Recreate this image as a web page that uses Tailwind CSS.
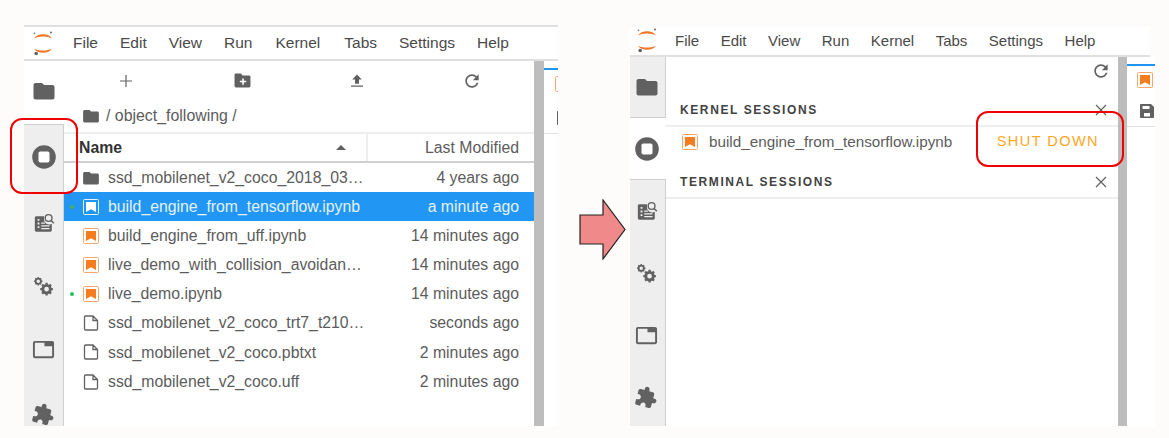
<!DOCTYPE html>
<html lang="en">
<head>
  <meta charset="UTF-8" />
  <title>JupyterLab running sessions</title>
  <script src="https://cdn.jsdelivr.net/npm/@tailwindcss/browser@4"></script>
</head>
<body class="w-[1169px] h-[438px] overflow-hidden bg-[#fdfcfa] font-['Liberation_Sans',Arial,sans-serif] relative">
  <svg class="hidden">
    <symbol id="logo" viewBox="0 0 20 25">
      <path d="M1 7.500C4 1.800 16 1.800 19 7.500C15 4.800 5 4.800 1 7.500Z" fill="#f37726"/>
      <path d="M1 17.500C5 20.300 15 20.300 19 17.500C16 23.300 4 23.300 1 17.500Z" fill="#f37726"/>
      <circle cx="18" cy="1.500" r="1.100" fill="#757575"/><circle cx="1.500" cy="2.400" r=".8" fill="#757575"/><circle cx="3.200" cy="22.500" r="1.800" fill="#616161"/>
    </symbol>
    <symbol id="folder" viewBox="0 0 24 24"><path fill="#616161" d="M10 4H3.500C2.400 4 1.500 4.900 1.500 6v12.500c0 1.100.9 2 2 2h17c1.100 0 2-.9 2-2V8c0-1.100-.9-2-2-2H12l-2-2z"/></symbol>
    <symbol id="stop" viewBox="0 0 24 24"><circle cx="12" cy="12" r="11.800" fill="#616161"/><rect x="6.500" y="6.500" width="11" height="11" rx="1.800" fill="#fff"/></symbol>
    <symbol id="inspect" viewBox="0 0 24 24">
      <path fill="#616161" d="M2 6C2 5.200 2.700 4.500 3.500 4.500H12v3.500c0 3 2.500 5.500 5.500 5.500 1.200 0 2.500-.4 3-.8V20c0 .8-.7 1.500-1.500 1.500H3.500C2.700 21.500 2 20.800 2 20z"/>
      <path fill="#eee" d="M5 7.500h2v2H5zM5 11.500h2v2H5zM5 15.500h2v2H5zM9 14.500h9v1.200H9zM9 17.500h9v1.200H9zM9 11.500h4v1.200H9z"/>
      <circle cx="17" cy="6.500" r="3.700" fill="none" stroke="#616161" stroke-width="1.500"/>
      <path d="M19.700 9.200l3 3" stroke="#616161" stroke-width="1.700"/>
    </symbol>
    <symbol id="gears" viewBox="0 0 24 24">
      <circle cx="6" cy="6" r="3" fill="none" stroke="#616161" stroke-width="2"/>
      <path d="M6 1.200v2M6 8.800v2M1.200 6h2M8.800 6h2M2.700 2.700l1.300 1.300M8 8l1.300 1.300M9.300 2.700L8 4M4 8L2.700 9.300" stroke="#616161" stroke-width="1.600"/>
      <circle cx="15.500" cy="15" r="4.300" fill="none" stroke="#616161" stroke-width="3.200"/>
      <path d="M15.500 7.800v3M15.500 19.200v3M8.300 15h3M19.700 15h3M10.400 9.900l2 2M18.600 18.100l2 2M20.600 9.900l-2 2M12.400 18.100l-2 2" stroke="#616161" stroke-width="2.600"/>
    </symbol>
    <symbol id="tab" viewBox="0 0 24 24"><path fill="#616161" d="M3 3h18c1.100 0 2 .9 2 2v14c0 1.100-.9 2-2 2H3c-1.100 0-2-.9-2-2V5c0-1.100.9-2 2-2zm0 2v14h18V8.500h-8V5z"/></symbol>
    <symbol id="puzzle" viewBox="0 0 24 24"><path fill="#616161" transform="rotate(15 12 12)" d="M20.500 11H19V7c0-1.100-.9-2-2-2h-4V3.500C13 2.120 11.880 1 10.500 1S8 2.120 8 3.500V5H4c-1.100 0-1.990.9-1.990 2v3.800H3.500c1.490 0 2.700 1.210 2.700 2.700s-1.210 2.700-2.700 2.700H2V20c0 1.100.9 2 2 2h3.800v-1.500c0-1.490 1.210-2.700 2.700-2.700 1.490 0 2.700 1.210 2.700 2.700V22H17c1.100 0 2-.9 2-2v-4h1.500c1.380 0 2.500-1.120 2.500-2.500S21.880 11 20.500 11z"/></symbol>
    <symbol id="nb" viewBox="0 0 16 16"><rect x=".5" y=".5" width="15" height="15" rx="1" fill="#fff" stroke="#f9a66d"/><path fill="#f57c1f" d="M3 3h10v10l-5-2.800L3 13z"/></symbol>
    <symbol id="nbsel" viewBox="0 0 16 16"><rect x=".5" y=".5" width="15" height="15" rx="1" fill="#2196f3" stroke="#e3f2fd"/><path fill="#fff" d="M3 3h10v10l-5-2.800L3 13z"/></symbol>
    <symbol id="file" viewBox="0 0 16 16"><path fill="none" stroke="#616161" stroke-width="1.300" d="M1.500 2c0-.6.400-1 1-1H10l4.500 4.500V14c0 .6-.4 1-1 1h-11c-.6 0-1-.4-1-1zM10 1v4.500h4.500"/></symbol>
    <symbol id="refresh" viewBox="0 0 24 24"><path fill="#616161" d="M17.650 6.350C16.200 4.900 14.210 4 12 4c-4.420 0-7.990 3.580-7.990 8s3.570 8 7.990 8c3.730 0 6.840-2.550 7.730-6h-2.080c-.82 2.330-3.040 4-5.650 4-3.310 0-6-2.690-6-6s2.690-6 6-6c1.660 0 3.140.69 4.220 1.780L13 11h7V4l-2.350 2.350z"/></symbol>
    <symbol id="close" viewBox="0 0 12 12"><path stroke="#616161" stroke-width="1.200" d="M1 1l10 10M11 1L1 11"/></symbol>
    <symbol id="upload" viewBox="0 0 14 14"><path fill="#616161" d="M7 .5l4.800 5H9v4.300H5V5.500H2.200zM1 11.500h12v1.300H1z"/></symbol>
    <symbol id="newfolder" viewBox="0 0 16 14"><path fill="#616161" d="M6.500 .5H1.800C1 .5.500 1.100.500 1.800v10.400c0 .7.500 1.300 1.300 1.300h12.400c.7 0 1.300-.6 1.300-1.300V3.500c0-.7-.6-1.300-1.300-1.300H8.200z"/><path stroke="#fff" stroke-width="1.500" d="M8.500 5v6M5.500 8h6"/></symbol>
    <symbol id="save" viewBox="0 0 16 16"><path fill="#616161" d="M2 1h10l3 3v10c0 .6-.4 1-1 1H2c-.6 0-1-.4-1-1V2c0-.6.400-1 1-1z"/><path fill="#fff" d="M3.500 3h7v3h-7zM5 10h6v3.500H5z"/></symbol>
  </svg>

  <div class="flex items-start">
    <!-- file browser window -->
    <div class="ml-[24px] mt-[25px] w-[534px] h-[401px] bg-white flex flex-col border-t-2 border-[#e0e0e0] shrink-0">
      <div class="h-[34px] flex items-center border-b-2 border-[#e0e0e0] shrink-0 text-[15.500px] text-[#4a4a4a]">
        <svg class="w-[20px] h-[25px] ml-[9px] mr-[20px]"><use href="#logo"/></svg>
        <span class="mr-[22px]">File</span><span class="mr-[22px]">Edit</span><span class="mr-[22px]">View</span><span class="mr-[23px]">Run</span><span class="mr-[24px]">Kernel</span><span class="mr-[22px]">Tabs</span><span class="mr-[22px]">Settings</span><span>Help</span>
      </div>
      <div class="flex flex-1 min-h-0">
        <div class="w-[40px] shrink-0 flex flex-col">
          <div class="h-[63px] bg-white flex items-center justify-center pb-[3px]"><svg class="w-[24px] h-[24px]"><use href="#folder"/></svg></div>
          <div class="flex-1 bg-[#eeeeee] border-t border-r border-[#cfcfcf] flex flex-col items-center">
            <svg class="w-[24px] h-[24px] mt-[20px]"><use href="#stop"/></svg>
            <svg class="w-[22px] h-[22px] mt-[43px]"><use href="#inspect"/></svg>
            <svg class="w-[21px] h-[21px] mt-[42px]"><use href="#gears"/></svg>
            <svg class="w-[23px] h-[23px] mt-[41px]"><use href="#tab"/></svg>
            <svg class="w-[23px] h-[23px] mt-[42px]"><use href="#puzzle"/></svg>
          </div>
        </div>
        <div class="w-[470px] shrink-0 flex flex-col text-[15.800px] text-[#5c5c5c]">
          <div class="h-[39px] flex items-center shrink-0">
            <svg class="w-[12px] h-[12px] ml-[56px]" viewBox="0 0 12 12"><path stroke="#616161" stroke-width="1.200" d="M6 0v12M0 6h12"/></svg>
            <svg class="w-[17px] h-[15px] ml-[102px]"><use href="#newfolder"/></svg>
            <svg class="w-[14px] h-[14px] ml-[99px]"><use href="#upload"/></svg>
            <svg class="w-[20px] h-[20px] ml-[98px]"><use href="#refresh"/></svg>
          </div>
          <div class="h-[32px] flex items-center pl-[18px] pb-[1px] shrink-0">
            <svg class="w-[18px] h-[18px] mr-[6px]"><use href="#folder"/></svg><span class="text-[15.900px]">/ object_following /</span>
          </div>
          <div class="h-[31px] flex border-t-2 border-b-2 border-t-[#eeeeee] border-b-[#d0d0d0] shrink-0">
            <div class="w-[304px] border-r-2 border-[#eeeeee] flex items-center justify-between pl-[15px] pr-[20px]">
              <span class="font-bold text-[#333]">Name</span>
              <span class="w-0 h-0 border-x-[5px] border-x-transparent border-b-[5px] border-b-[#616161]"></span>
            </div>
            <div class="flex-1 flex items-center justify-end pr-[15px]">Last Modified</div>
          </div>
          <div class="flex flex-col">
            <div class="h-[29.150px] flex items-center pl-[18px] pr-[15px]"><svg class="w-[18px] h-[18px] mr-[8px] shrink-0"><use href="#folder"/></svg><span>ssd_mobilenet_v2_coco_2018_03…</span><span class="ml-auto">4 years ago</span></div>
            <div class="h-[29.150px] flex items-center pl-[19px] pr-[15px] bg-[#2196f3] text-[#e3f2fd] relative"><span class="absolute left-[6px] w-[4px] h-[4px] rounded-full bg-[#4caf50]"></span><svg class="w-[16px] h-[16px] mr-[9px] shrink-0"><use href="#nbsel"/></svg><span>build_engine_from_tensorflow.ipynb</span><span class="ml-auto">a minute ago</span></div>
            <div class="h-[29.150px] flex items-center pl-[19px] pr-[15px]"><svg class="w-[16px] h-[16px] mr-[9px] shrink-0"><use href="#nb"/></svg><span>build_engine_from_uff.ipynb</span><span class="ml-auto">14 minutes ago</span></div>
            <div class="h-[29.150px] flex items-center pl-[19px] pr-[15px]"><svg class="w-[16px] h-[16px] mr-[9px] shrink-0"><use href="#nb"/></svg><span>live_demo_with_collision_avoidan…</span><span class="ml-auto">14 minutes ago</span></div>
            <div class="h-[29.150px] flex items-center pl-[19px] pr-[15px] relative"><span class="absolute left-[6px] w-[4px] h-[4px] rounded-full bg-[#22c55e]"></span><svg class="w-[16px] h-[16px] mr-[9px] shrink-0"><use href="#nb"/></svg><span>live_demo.ipynb</span><span class="ml-auto">14 minutes ago</span></div>
            <div class="h-[29.150px] flex items-center pl-[19px] pr-[15px]"><svg class="w-[16px] h-[16px] mr-[9px] shrink-0"><use href="#file"/></svg><span>ssd_mobilenet_v2_coco_trt7_t210…</span><span class="ml-auto">seconds ago</span></div>
            <div class="h-[29.150px] flex items-center pl-[19px] pr-[15px]"><svg class="w-[16px] h-[16px] mr-[9px] shrink-0"><use href="#file"/></svg><span>ssd_mobilenet_v2_coco.pbtxt</span><span class="ml-auto">2 minutes ago</span></div>
            <div class="h-[29.150px] flex items-center pl-[19px] pr-[15px]"><svg class="w-[16px] h-[16px] mr-[9px] shrink-0"><use href="#file"/></svg><span>ssd_mobilenet_v2_coco.uff</span><span class="ml-auto">2 minutes ago</span></div>
          </div>
        </div>
        <div class="flex-1 flex min-w-0">
          <div class="w-[10px] bg-[#bdbdbd] shrink-0"></div>
          <div class="flex-1 bg-white pt-[7px] overflow-hidden">
            <div class="border-t-2 border-[#2196f3] h-[65px] pl-[11px] overflow-hidden">
              <svg class="w-[16px] h-[16px] mt-[6px]"><use href="#nb"/></svg>
              <svg class="w-[16px] h-[16px] mt-[18px] ml-[1px]"><use href="#save"/></svg>
            </div>
            <div class="border-t border-[#e0e0e0]"></div>
          </div>
        </div>
      </div>
    </div>

    <!-- arrow between the two windows -->
    <svg class="ml-[21px] mt-[199px] w-[47px] h-[61px] shrink-0" viewBox="0 0 47 61">
      <path d="M1 16h23V1l22 29.500L24 60V45H1z" fill="#f08a8a" stroke="#222" stroke-width="1.200"/>
    </svg>

    <!-- running sessions window -->
    <div class="ml-[4px] mt-[27px] w-[520px] h-[399px] bg-white flex flex-col shrink-0">
      <div class="h-[30px] flex items-center border-b-2 border-[#e0e0e0] shrink-0 text-[15px] text-[#4a4a4a]">
        <svg class="w-[20px] h-[25px] ml-[7px] mr-[18px] mb-[2px]"><use href="#logo"/></svg>
        <span class="mr-[21.500px]">File</span><span class="mr-[21.500px]">Edit</span><span class="mr-[21.500px]">View</span><span class="mr-[21.500px]">Run</span><span class="mr-[21.500px]">Kernel</span><span class="mr-[21.500px]">Tabs</span><span class="mr-[21.500px]">Settings</span><span>Help</span>
      </div>
      <div class="flex flex-1 min-h-0">
        <div class="w-[36px] shrink-0 flex flex-col">
          <div class="h-[61px] bg-[#eeeeee] border-r border-b border-[#cfcfcf] flex items-center justify-center pr-[2px]"><svg class="w-[24px] h-[24px]"><use href="#folder"/></svg></div>
          <div class="h-[61px] bg-white flex items-center justify-center pr-[2px]"><svg class="w-[24px] h-[24px]"><use href="#stop"/></svg></div>
          <div class="flex-1 bg-[#eeeeee] border-t border-r border-[#cfcfcf] flex flex-col items-center pr-[2px]">
            <svg class="w-[22px] h-[22px] mt-[20px]"><use href="#inspect"/></svg>
            <svg class="w-[21px] h-[21px] mt-[41px]"><use href="#gears"/></svg>
            <svg class="w-[23px] h-[23px] mt-[40px]"><use href="#tab"/></svg>
            <svg class="w-[23px] h-[23px] mt-[39px]"><use href="#puzzle"/></svg>
          </div>
        </div>
        <div class="w-[452px] shrink-0 flex flex-col text-[15.250px] text-[#5c5c5c]">
          <div class="h-[30px] flex items-center justify-end pr-[7px] shrink-0 pb-[2px]"><svg class="w-[20px] h-[20px]"><use href="#refresh"/></svg></div>
          <div class="h-[40px] flex items-center justify-between pl-[14px] pr-[11px] pt-[8px] border-b-2 border-[#eeeeee] shrink-0">
            <span class="font-bold text-[12px] tracking-[1.600px] text-[#424242]">KERNEL SESSIONS</span>
            <svg class="w-[12px] h-[12px]"><use href="#close"/></svg>
          </div>
          <div class="h-[30px] flex items-center pl-[16px] pr-[19px] shrink-0">
            <svg class="w-[16px] h-[16px] mr-[11px]"><use href="#nb"/></svg><span>build_engine_from_tensorflow.ipynb</span>
            <span class="ml-auto text-[#ffa726] text-[14.600px] tracking-[1.400px]">SHUT DOWN</span>
          </div>
          <div class="h-[42px] flex items-center justify-between pl-[14px] pr-[11px] border-b-2 border-[#eeeeee] shrink-0 pt-[10px]">
            <span class="font-bold text-[12px] tracking-[1.600px] text-[#424242]">TERMINAL SESSIONS</span>
            <svg class="w-[12px] h-[12px]"><use href="#close"/></svg>
          </div>
        </div>
        <div class="flex-1 flex min-w-0">
          <div class="w-[9px] bg-[#bdbdbd] shrink-0"></div>
          <div class="flex-1 bg-white pt-[7px]">
            <div class="border-t-2 border-[#2196f3] h-[62px] pl-[10px] overflow-hidden">
              <svg class="w-[16px] h-[16px] mt-[6px]"><use href="#nb"/></svg>
              <svg class="w-[16px] h-[16px] mt-[15px] ml-[2px]"><use href="#save"/></svg>
            </div>
            <div class="border-t border-[#e0e0e0]"></div>
          </div>
        </div>
      </div>
    </div>
  </div>

  <!-- red call-outs drawn over the screenshots -->
  <div class="absolute left-[10px] top-[118px] w-[68px] h-[76px] rounded-[12px] border-2 border-[#f00000]"></div>
  <div class="absolute left-[976px] top-[111px] w-[148px] h-[56px] rounded-[12px] border-2 border-[#f00000]"></div>
</body>
</html>
